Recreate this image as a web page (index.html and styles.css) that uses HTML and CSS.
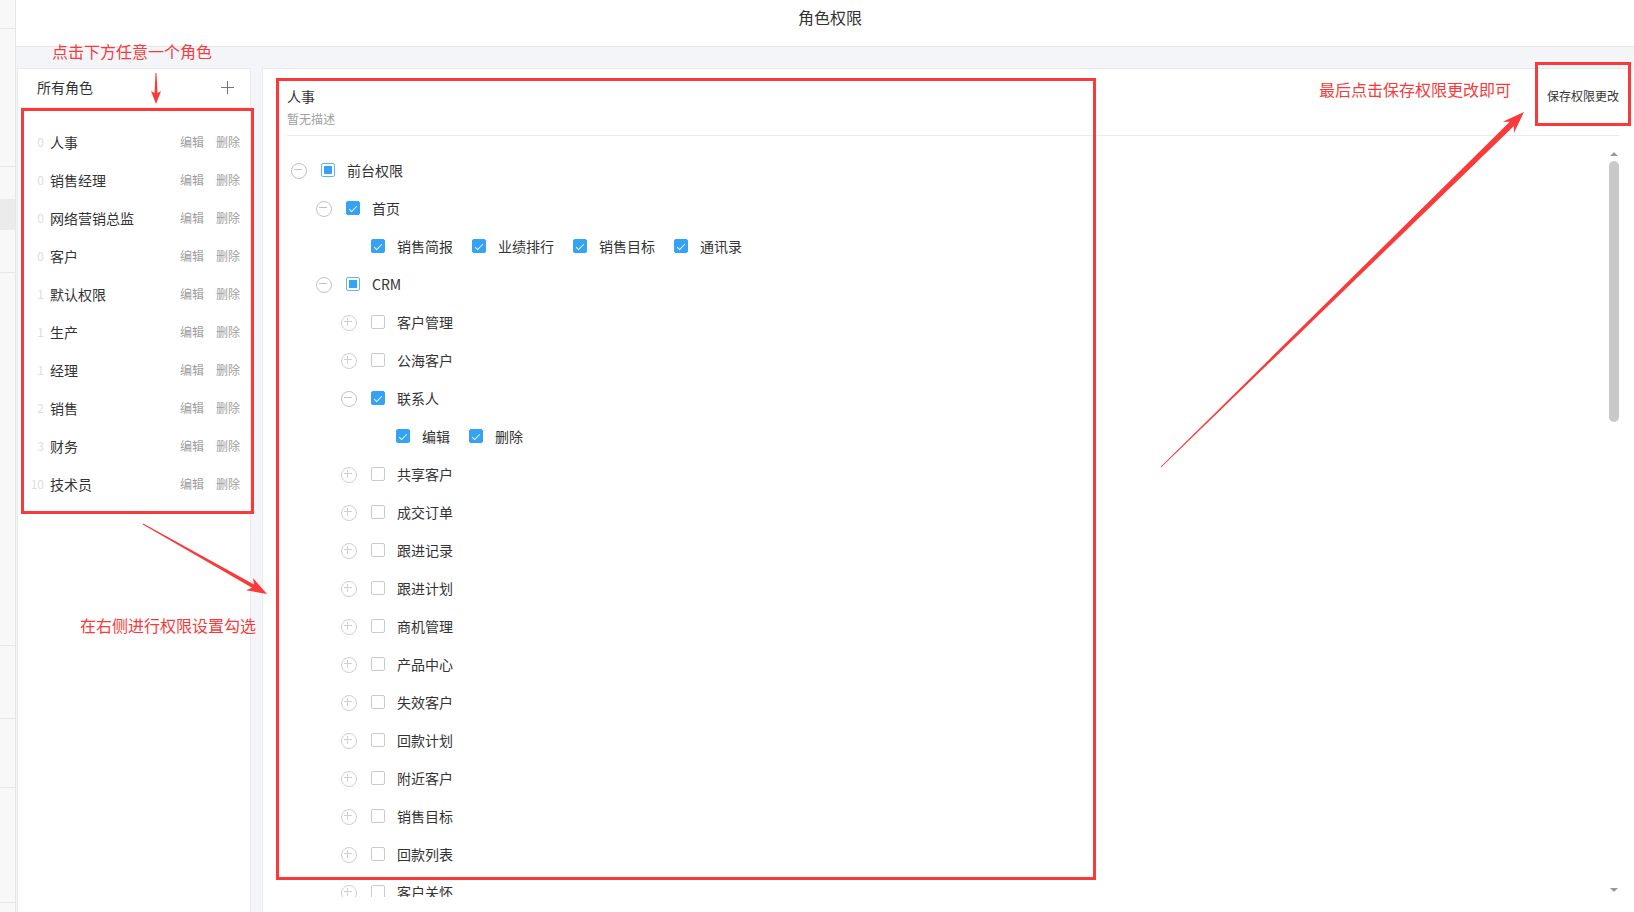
FILE: index.html
```html
<!DOCTYPE html>
<html lang="zh-CN">
<head>
<meta charset="utf-8">
<title>角色权限</title>
<link rel="stylesheet" href="styles.css">
</head>
<body>
<div class="app">
  <aside class="strip">
    <div class="s1"></div><div class="s2"></div><div class="s3"></div><div class="s4"></div>
    <div class="s5"></div><div class="s6"></div><div class="s7"></div><div class="s8"></div><div class="s9"></div>
  </aside>

  <main class="main">
    <header class="topbar"><h1>角色权限</h1></header>

    <div class="workspace">
      <section class="roles">
        <div class="roles-head">
          <span>所有角色</span>
          <button class="add" type="button" aria-label="新增角色">
            <svg width="15" height="15" viewBox="0 0 15 15"><path d="M7.5 1v13M1 7.5h13" stroke="#777" stroke-width="1.1" fill="none"/></svg>
          </button>
        </div>
        <ul class="role-list">
          <li class="role"><span class="sort">0</span><span class="name">人事</span><a class="op">编辑</a><a class="op">删除</a></li>
          <li class="role"><span class="sort">0</span><span class="name">销售经理</span><a class="op">编辑</a><a class="op">删除</a></li>
          <li class="role"><span class="sort">0</span><span class="name">网络营销总监</span><a class="op">编辑</a><a class="op">删除</a></li>
          <li class="role"><span class="sort">0</span><span class="name">客户</span><a class="op">编辑</a><a class="op">删除</a></li>
          <li class="role"><span class="sort">1</span><span class="name">默认权限</span><a class="op">编辑</a><a class="op">删除</a></li>
          <li class="role"><span class="sort">1</span><span class="name">生产</span><a class="op">编辑</a><a class="op">删除</a></li>
          <li class="role"><span class="sort">1</span><span class="name">经理</span><a class="op">编辑</a><a class="op">删除</a></li>
          <li class="role"><span class="sort">2</span><span class="name">销售</span><a class="op">编辑</a><a class="op">删除</a></li>
          <li class="role"><span class="sort">3</span><span class="name">财务</span><a class="op">编辑</a><a class="op">删除</a></li>
          <li class="role"><span class="sort">10</span><span class="name">技术员</span><a class="op">编辑</a><a class="op">删除</a></li>
        </ul>
      </section>

      <section class="perm">
        <div class="perm-head">
          <div class="info">
            <h2>人事</h2>
            <p>暂无描述</p>
          </div>
          <button class="save" type="button">保存权限更改</button>
        </div>

        <div class="tree-box">
          <div class="tree-view">
            <ul class="tree">
              <li class="node lv0"><i class="tg minus"></i><span class="cb part"></span><span class="lb">前台权限</span></li>
              <li class="node lv1"><i class="tg minus"></i><span class="cb on"></span><span class="lb">首页</span></li>
              <li class="node lv2 leaves"><i class="tg none"></i>
                <label class="leaf"><span class="cb on"></span>销售简报</label>
                <label class="leaf"><span class="cb on"></span>业绩排行</label>
                <label class="leaf"><span class="cb on"></span>销售目标</label>
                <label class="leaf"><span class="cb on"></span>通讯录</label>
              </li>
              <li class="node lv1"><i class="tg minus"></i><span class="cb part"></span><span class="lb">CRM</span></li>
              <li class="node lv2"><i class="tg plus"></i><span class="cb"></span><span class="lb">客户管理</span></li>
              <li class="node lv2"><i class="tg plus"></i><span class="cb"></span><span class="lb">公海客户</span></li>
              <li class="node lv2"><i class="tg minus"></i><span class="cb on"></span><span class="lb">联系人</span></li>
              <li class="node lv3 leaves"><i class="tg none"></i>
                <label class="leaf"><span class="cb on"></span>编辑</label>
                <label class="leaf"><span class="cb on"></span>删除</label>
              </li>
              <li class="node lv2"><i class="tg plus"></i><span class="cb"></span><span class="lb">共享客户</span></li>
              <li class="node lv2"><i class="tg plus"></i><span class="cb"></span><span class="lb">成交订单</span></li>
              <li class="node lv2"><i class="tg plus"></i><span class="cb"></span><span class="lb">跟进记录</span></li>
              <li class="node lv2"><i class="tg plus"></i><span class="cb"></span><span class="lb">跟进计划</span></li>
              <li class="node lv2"><i class="tg plus"></i><span class="cb"></span><span class="lb">商机管理</span></li>
              <li class="node lv2"><i class="tg plus"></i><span class="cb"></span><span class="lb">产品中心</span></li>
              <li class="node lv2"><i class="tg plus"></i><span class="cb"></span><span class="lb">失效客户</span></li>
              <li class="node lv2"><i class="tg plus"></i><span class="cb"></span><span class="lb">回款计划</span></li>
              <li class="node lv2"><i class="tg plus"></i><span class="cb"></span><span class="lb">附近客户</span></li>
              <li class="node lv2"><i class="tg plus"></i><span class="cb"></span><span class="lb">销售目标</span></li>
              <li class="node lv2"><i class="tg plus"></i><span class="cb"></span><span class="lb">回款列表</span></li>
              <li class="node lv2"><i class="tg plus"></i><span class="cb"></span><span class="lb">客户关怀</span></li>
            </ul>
          </div>
          <div class="scrollbar" aria-hidden="true">
            <span class="sb-btn sb-up"></span>
            <span class="sb-track"><span class="sb-thumb"></span></span>
            <span class="sb-btn sb-down"></span>
          </div>
        </div>
      </section>
    </div>
  </main>
</div>

<!-- guide marks drawn on top of the page -->
<div class="guide">
  <svg class="arrows" width="1634" height="912" viewBox="0 0 1634 912">
    <polygon points="155.5,73 154.5,93 151,91 156,104 161,91 157.5,93 156.5,73"/>
    <polygon points="142.75,524.44 252.09,587.87 246.14,590.27 267,594 253.02,578.07 254.05,584.39 143.25,523.56"/>
    <polygon points="1161.35,467.36 1513.94,126.04 1513.86,133.10 1524,112 1502.68,121.66 1509.74,121.74 1160.65,466.64"/>
  </svg>
  <div class="mark mark-roles"></div>
  <div class="mark mark-tree"></div>
  <div class="mark mark-save"></div>
  <p class="tip tip-roles">点击下方任意一个角色</p>
  <p class="tip tip-tree">在右侧进行权限设置勾选</p>
  <p class="tip tip-save">最后点击保存权限更改即可</p>
</div>
</body>
</html>
```
FILE: styles.css
```css
* {
  box-sizing: border-box;
  margin: 0;
  padding: 0;
}

html,
body {
  height: 100%;
  overflow: hidden;
}

body {
  font-family: "Noto Sans CJK SC", "Microsoft YaHei", sans-serif;
  color: #333;
  background: #f4f5f8;
  position: relative;
}

ul {
  list-style: none;
}

button {
  font-family: inherit;
  background: none;
  border: 0;
  cursor: pointer;
}

.app {
  display: flex;
  height: 912px;
}

/* collapsed navigation edge */
.strip {
  width: 16px;
  flex: none;
  background: #f8f8f8;
  border-right: 1px solid #e6e6e6;
  display: flex;
  flex-direction: column;
}

.strip div {
  border-bottom: 1px solid #e7e7e7;
}

.strip .s1 { height: 29px; }
.strip .s2 { height: 138px; }
.strip .s3 { height: 32px; border-bottom: 0; }
.strip .s4 { height: 31px; border-bottom: 0; background: #ebebeb; }
.strip .s5 { height: 43px; }
.strip .s6 { height: 373px; }
.strip .s7 { height: 73px; }
.strip .s8 { height: 69px; }
.strip .s9 { height: 115px; }

.main {
  flex: 1;
  min-width: 0;
  display: flex;
  flex-direction: column;
}

.topbar {
  height: 47px;
  flex: none;
  background: #fff;
  border-bottom: 1px solid #e6e6e6;
  padding: 6px 0 0 10px;
  text-align: center;
}

.topbar h1 {
  font-size: 16px;
  font-weight: 400;
  line-height: 22px;
  color: #333;
}

.workspace {
  flex: 1;
  min-height: 0;
  display: flex;
  gap: 11px;
  padding: 21px 0 0 1px;
}

/* role list */
.roles {
  width: 234px;
  flex: none;
  background: #fff;
  border: 1px solid #e9e9ee;
  border-bottom: 0;
}

.roles-head {
  height: 39px;
  border-bottom: 1px solid #ececec;
  display: flex;
  align-items: center;
  justify-content: space-between;
  padding: 0 15px 2px 19px;
  font-size: 14px;
  line-height: 20px;
}

.add {
  width: 15px;
  height: 15px;
  display: flex;
}

.role-list {
  padding-top: 15px;
}

.role {
  height: 38px;
  display: flex;
  align-items: center;
  padding: 0 10px 0 2px;
}

.sort {
  width: 24px;
  text-align: right;
  font-size: 12px;
  line-height: 18px;
  color: #dedede;
}

.name {
  flex: 1;
  margin-left: 6px;
  font-size: 14px;
  line-height: 20px;
  color: #333;
}

.op {
  font-size: 12px;
  line-height: 18px;
  color: #a0a0a0;
  cursor: pointer;
}

.op + .op {
  margin-left: 12px;
}

/* permission tree */
.perm {
  flex: 1;
  min-width: 0;
  background: #fff;
  border: 1px solid #e9e9ee;
  border-right: 0;
  border-bottom: 0;
  padding: 17px 15px 0 24px;
}

.perm-head {
  display: flex;
  justify-content: space-between;
  align-items: flex-start;
  border-bottom: 1px solid #ebebeb;
  padding-bottom: 7px;
}

.info h2 {
  font-size: 14px;
  font-weight: 400;
  line-height: 20px;
  color: #333;
}

.info p {
  margin-top: 4px;
  font-size: 12px;
  line-height: 18px;
  color: #a0a0a0;
}

.save {
  font-size: 12px;
  line-height: 20px;
  color: #333;
}

.tree-box {
  margin-top: 11px;
  height: 750px;
  display: flex;
}

.tree-view {
  flex: 1;
  min-width: 0;
  overflow: hidden;
}

.tree {
  padding-top: 4px;
}

/* thin scrollbar with arrow buttons */
.scrollbar {
  width: 10px;
  flex: none;
  display: flex;
  flex-direction: column;
}

.sb-btn {
  height: 14px;
  flex: none;
  display: flex;
  align-items: center;
  justify-content: center;
}

.sb-btn::before {
  content: "";
  border-left: 4px solid transparent;
  border-right: 4px solid transparent;
}

.sb-up::before {
  border-bottom: 4px solid #999;
}

.sb-down::before {
  border-top: 4px solid #999;
}

.sb-track {
  flex: 1;
}

.sb-thumb {
  display: block;
  height: 261px;
  border-radius: 5px;
  background: #c9c9c9;
}

.node {
  height: 38px;
  display: flex;
  align-items: center;
  font-size: 14px;
  line-height: 20px;
  color: #333;
}

.lv1 { padding-left: 25px; }
.lv2 { padding-left: 50px; }
.lv3 { padding-left: 75px; }

.tg {
  flex: none;
  width: 24px;
  height: 14px;
  display: flex;
  justify-content: center;
}

.tg::before {
  content: "";
  width: 14px;
  height: 14px;
  border: 1px solid #c2c2c2;
  border-radius: 50%;
  background: linear-gradient(#c2c2c2, #c2c2c2) 2px 5px / 8px 1px no-repeat;
}

.tg.plus::before {
  border-color: #d0d0d0;
  background:
    linear-gradient(#d0d0d0, #d0d0d0) 2px 5px / 8px 1px no-repeat,
    linear-gradient(#d0d0d0, #d0d0d0) 5px 2px / 1px 8px no-repeat;
}

.tg.none::before {
  visibility: hidden;
}

.cb {
  flex: none;
  position: relative;
  width: 14px;
  height: 14px;
  margin: 0 12px 0 10px;
  border: 1px solid #cacaca;
  border-radius: 2px;
  background: #fff;
}

.cb.on {
  background: #36a2f4;
  border-color: #36a2f4;
}

.cb.on::after {
  content: "";
  position: absolute;
  left: 4px;
  top: 1.5px;
  width: 3px;
  height: 7px;
  border: solid #e8f4fe;
  border-width: 0 1.3px 1.3px 0;
  transform: rotate(45deg);
}

.cb.part {
  border-color: #5db4f6;
}

.cb.part::after {
  content: "";
  position: absolute;
  left: 2px;
  top: 2px;
  width: 8px;
  height: 8px;
  background: #36a2f4;
}

.leaf {
  display: flex;
  align-items: center;
  margin-left: 19px;
  cursor: pointer;
}

.leaf:first-of-type {
  margin-left: 10px;
}

.leaf .cb {
  margin-left: 0;
}

/* guide marks */
.guide {
  position: absolute;
  inset: 0;
  pointer-events: none;
}

.arrows {
  position: absolute;
  left: 0;
  top: 0;
  fill: #fa3a3a;
}

.mark {
  position: absolute;
  border: 3px solid #fa3a3a;
}

.mark-roles {
  left: 21px;
  top: 108px;
  width: 233px;
  height: 406px;
}

.mark-tree {
  left: 276px;
  top: 78px;
  width: 820px;
  height: 802px;
}

.mark-save {
  left: 1535px;
  top: 62px;
  width: 96px;
  height: 64px;
}

.tip {
  position: absolute;
  font-size: 16px;
  line-height: 20px;
  color: #fa3a3a;
  white-space: nowrap;
}

.tip-roles {
  left: 52px;
  top: 41px;
}

.tip-tree {
  left: 80px;
  top: 615px;
}

.tip-save {
  left: 1319px;
  top: 79px;
}
```
